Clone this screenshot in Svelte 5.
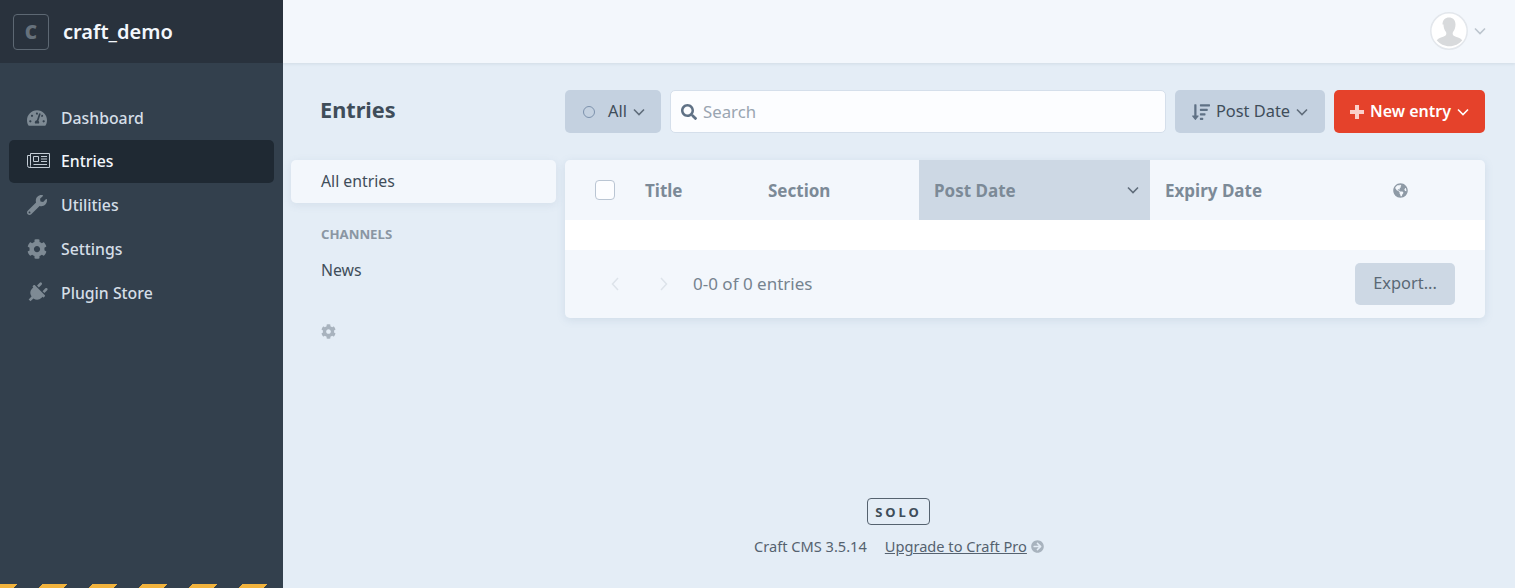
<script>
	const cog = "M487.4 315.7l-42.6-24.6c4.3-23.2 4.3-47 0-70.2l42.6-24.6c4.9-2.8 7.1-8.6 5.5-14-11.1-35.6-30-67.8-54.7-94.6-3.8-4.1-10-5.1-14.8-2.3L380.8 110c-17.9-15.4-38.5-27.3-60.8-35.1V25.8c0-5.6-3.9-10.5-9.4-11.7-36.7-8.2-74.3-7.8-109.2 0-5.5 1.2-9.4 6.1-9.4 11.7V75c-22.2 7.9-42.8 19.8-60.8 35.1L88.7 85.5c-4.9-2.8-11-1.9-14.8 2.3-24.7 26.7-43.6 58.9-54.7 94.6-1.7 5.4.6 11.2 5.5 14L67.3 221c-4.3 23.2-4.3 47 0 70.2l-42.6 24.6c-4.9 2.8-7.1 8.6-5.5 14 11.1 35.6 30 67.8 54.7 94.6 3.8 4.1 10 5.1 14.8 2.3l42.6-24.6c17.9 15.4 38.5 27.3 60.8 35.1v49.2c0 5.6 3.9 10.5 9.4 11.7 36.7 8.2 74.3 7.8 109.2 0 5.5-1.2 9.4-6.1 9.4-11.7v-49.2c22.2-7.9 42.8-19.8 60.8-35.1l42.6 24.6c4.9 2.8 11 1.9 14.8-2.3 24.7-26.7 43.6-58.9 54.7-94.6 1.5-5.5-.7-11.3-5.6-14.1zM256 336c-44.1 0-80-35.9-80-80s35.9-80 80-80 80 35.9 80 80-35.9 80-80 80z";
	const nav = [
		{ label: "Dashboard", box: "0 0 576 512", d: "M288 32C128.94 32 0 160.94 0 320c0 52.8 14.25 102.26 39.06 144.8 5.61 9.62 16.3 15.2 27.44 15.2h443c11.14 0 21.83-5.58 27.44-15.2C561.75 422.26 576 372.8 576 320c0-159.06-128.94-288-288-288zm0 64c14.71 0 26.58 10.13 30.32 23.65-1.11 2.26-2.64 4.23-3.45 6.67l-9.22 27.67c-5.13 3.49-10.97 6.01-17.64 6.01-17.67 0-32-14.33-32-32S270.33 96 288 96zM96 384c-17.67 0-32-14.33-32-32s14.33-32 32-32 32 14.33 32 32-14.33 32-32 32zm48-160c-17.67 0-32-14.33-32-32s14.33-32 32-32 32 14.33 32 32-14.33 32-32 32zm246.77-72.41l-61.33 184C343.13 347.33 352 364.54 352 384c0 11.72-3.38 22.55-8.88 32H232.88c-5.5-9.45-8.88-20.28-8.88-32 0-33.94 26.5-61.43 59.9-63.59l61.34-184.01c4.17-12.56 17.73-19.45 30.36-15.17 12.57 4.19 19.35 17.79 15.17 30.36zm14.66 57.2l15.52-46.55c3.47-1.29 7.13-2.23 11.05-2.23 17.67 0 32 14.33 32 32s-14.33 32-32 32c-11.38-.01-20.89-6.27-26.57-15.22zM480 384c-17.67 0-32-14.33-32-32s14.33-32 32-32 32 14.33 32 32-14.33 32-32 32z" },
		{ label: "Entries", active: true, news: true, box: "0 0 24 17" },
		{ label: "Utilities", box: "0 0 512 512", d: "M507.73 109.1c-2.24-9.03-13.54-12.09-20.12-5.51l-74.36 74.36-67.88-11.31-11.31-67.88 74.36-74.36c6.62-6.62 3.43-17.9-5.66-20.16-47.38-11.74-99.55.91-136.58 37.93-39.64 39.64-50.55 97.1-34.05 147.2L18.74 402.76c-24.99 24.99-24.99 65.51 0 90.5 24.99 24.99 65.51 24.99 90.5 0l213.21-213.21c50.12 16.71 107.47 5.68 147.37-34.22 37.07-37.07 49.7-89.32 37.91-136.73zM64 472c-13.25 0-24-10.75-24-24 0-13.26 10.75-24 24-24s24 10.74 24 24c0 13.25-10.75 24-24 24z" },
		{ label: "Settings", box: "0 0 512 512", d: cog },
		{ label: "Plugin Store", box: "-61 -61 634 634", plug: true, d: "M320,32a32,32,0,0,0-64,0v96h64Zm48,128H16A16,16,0,0,0,0,176v32a16,16,0,0,0,16,16H32v32A160.07,160.07,0,0,0,160,412.8V512h64V412.8A160.07,160.07,0,0,0,352,256V224h16a16,16,0,0,0,16-16V176A16,16,0,0,0,368,160ZM128,32a32,32,0,0,0-64,0v96h64Z" },
	];
	const columns = [
		{ label: "Title" },
		{ label: "Section" },
		{ label: "Post Date", sorted: true },
		{ label: "Expiry Date" },
	];
</script>

{#snippet chevron(cls)}
	<svg class="chevron {cls}" viewBox="0 0 12 8" aria-hidden="true"><path d="M1 1.5l5 5 5-5" /></svg>
{/snippet}

<div class="page">
	<aside class="sidebar">
		<div class="brand">
			<span class="logo">C</span>
			<span class="site">craft_demo</span>
		</div>
		<nav class="nav">
			{#each nav as item}
				<a class="nav-item" class:active={item.active} href="#top">
					<span class="nav-icon">
						<svg viewBox={item.box} class:plug={item.plug} class:news={item.news} aria-hidden="true">
							{#if item.plug}
								<g transform="rotate(45 256 256) translate(64 0)"><path d={item.d} /></g>
							{:else if item.news}
								<path d="M4.5 1.5h19v14h-20a2 2 0 0 1-2-2V3.500h3M4.500 1.500v12a2 2 0 0 1-1 2" />
								<path d="M7.500 4.500h5v5h-5zM15 4.500h6M15 7h6M15 9.500h6M7.500 12.500h13.500" />
							{:else}
								<path d={item.d} />
							{/if}
						</svg>
					</span>
					{item.label}
				</a>
			{/each}
		</nav>
		<div class="stripes"></div>
	</aside>

	<div class="right">
		<header class="topbar">
			<div class="avatar">
				<svg viewBox="0 0 38 38" aria-hidden="true">
					<circle cx="19" cy="19" r="18.2" fill="#fff" stroke="#e3e7ec" stroke-width="1.5" />
					<path d="M12.500 12.500c0-4.500 2.800-7 6.500-7s6.500 2.500 6.500 7c0 3-1 5.500-2.500 7.500-.6 1-.5 3 .8 3.800 2.500 1.300 6 1.900 8.500 4.400-3 3.800-7.700 6-12.800 6s-9.800-2.200-12.800-6c2.500-2.500 6-3.100 8.500-4.400 1.300-.8 1.400-2.800.8-3.800-1.500-2-2.500-4.500-2.500-7.500z" fill="#d8dadc" />
				</svg>
			</div>
			{@render chevron("user-chevron")}
		</header>

		<main class="main">
			<div class="toolbar">
				<h1>Entries</h1>
				<div class="actions">
					<button class="btn status">
						<span class="dot"></span>
						All
						{@render chevron("")}
					</button>
					<label class="search">
						<svg viewBox="0 0 512 512" aria-hidden="true"><path d="M505 442.7L405.3 343c-4.5-4.5-10.6-7-17-7H372c27.6-35.3 44-79.7 44-128C416 93.1 322.9 0 208 0S0 93.1 0 208s93.1 208 208 208c48.3 0 92.7-16.4 128-44v16.3c0 6.4 2.5 12.5 7 17l99.7 99.7c9.4 9.4 24.6 9.4 33.9 0l28.3-28.3c9.4-9.4 9.4-24.6.1-34zM208 336c-70.7 0-128-57.2-128-128 0-70.7 57.2-128 128-128 70.7 0 128 57.2 128 128 0 70.7-57.2 128-128 128z" /></svg>
						<input placeholder="Search" />
					</label>
					<button class="btn sort">
						<svg class="sort-icon" viewBox="0 0 512 512" aria-hidden="true"><path d="M304 416h-64a16 16 0 0 0-16 16v32a16 16 0 0 0 16 16h64a16 16 0 0 0 16-16v-32a16 16 0 0 0-16-16zm-128-64h-48V48a16 16 0 0 0-16-16H80a16 16 0 0 0-16 16v304H16c-14.19 0-21.37 17.24-11.29 27.31l80 96a16 16 0 0 0 22.62 0l80-96C197.35 369.26 190.22 352 176 352zm256-192H240a16 16 0 0 0-16 16v32a16 16 0 0 0 16 16h192a16 16 0 0 0 16-16v-32a16 16 0 0 0-16-16zm-64 128H240a16 16 0 0 0-16 16v32a16 16 0 0 0 16 16h128a16 16 0 0 0 16-16v-32a16 16 0 0 0-16-16zM496 32H240a16 16 0 0 0-16 16v32a16 16 0 0 0 16 16h256a16 16 0 0 0 16-16V48a16 16 0 0 0-16-16z" /></svg>
						Post Date
						{@render chevron("")}
					</button>
					<button class="btn primary">
						<span class="plus"></span>
						New entry
						{@render chevron("")}
					</button>
				</div>
			</div>

			<div class="content">
				<div class="sources">
					<a class="source selected" href="#top">All entries</a>
					<div class="heading">CHANNELS</div>
					<a class="source" href="#top">News</a>
					<svg class="customize" viewBox="0 0 512 512" aria-hidden="true"><path d={cog} /></svg>
				</div>

				<div class="card">
					<div class="thead">
						<div class="th check"><span class="checkbox"></span></div>
						{#each columns as col}
							<div class="th" class:sorted={col.sorted}>
								{col.label}
								{#if col.sorted}{@render chevron("th-chevron")}{/if}
							</div>
						{/each}
						<div class="th globe">
							<svg viewBox="0 0 496 512" aria-hidden="true"><path d="M248 8C111.03 8 0 119.03 0 256s111.03 248 248 248 248-111.03 248-248S384.97 8 248 8zm82.29 357.6c-3.9 3.88-7.99 7.95-11.31 11.28-2.99 3-5.1 6.7-6.17 10.71-1.51 5.66-2.73 11.38-4.77 16.87l-17.39 46.85c-13.76 3-28 4.69-42.65 4.69v-27.38c1.69-12.62-7.64-36.26-22.63-51.25-6-6-9.37-14.14-9.37-22.63v-32.01c0-11.64-6.27-22.34-16.46-27.97-14.37-7.95-34.81-19.06-48.81-26.11-11.48-5.78-22.1-13.14-31.65-21.75l-.8-.72a114.792 114.792 0 0 1-18.06-20.74c-9.38-13.77-24.66-36.42-34.59-51.14 20.47-45.5 57.36-82.04 103.2-101.89l24.01 12.01C203.48 89.74 216 82.01 216 70.11v-11.3c7.99-1.29 16.12-2.11 24.39-2.42l28.3 28.3c6.25 6.25 6.25 16.38 0 22.63L264 112l-10.34 10.34c-3.12 3.12-3.12 8.19 0 11.31l4.69 4.69c3.12 3.12 3.12 8.19 0 11.31l-8 8a8.008 8.008 0 0 1-5.66 2.34h-8.99c-2.08 0-4.08.81-5.58 2.27l-9.92 9.65a8.008 8.008 0 0 0-1.58 9.31l15.59 31.19c2.66 5.32-1.21 11.58-7.15 11.58h-5.64c-1.93 0-3.79-.7-5.24-1.96l-9.28-8.06a16.017 16.017 0 0 0-15.55-3.1l-31.17 10.39a11.95 11.95 0 0 0-8.17 11.34c0 4.53 2.56 8.66 6.61 10.69l11.08 5.54c9.41 4.71 19.79 7.16 30.31 7.16s22.59 27.29 32 32h66.75c8.49 0 16.62 3.37 22.63 9.37l13.69 13.69a30.503 30.503 0 0 1 8.93 21.57 46.536 46.536 0 0 1-13.72 32.98zM417 274.25c-5.79-1.45-10.84-5-14.15-9.97l-17.98-26.97a23.97 23.97 0 0 1 0-26.62l19.59-29.38c2.32-3.47 5.5-6.29 9.24-8.15l12.98-6.49C440.2 193.59 448 223.87 448 256c0 8.67-.74 17.16-1.82 25.54L417 274.25z" /></svg>
						</div>
					</div>
					<div class="tbody"></div>
					<div class="tfoot">
						<svg class="pager" viewBox="0 0 8 14" aria-hidden="true"><path d="M7 1L1.5 7 7 13" /></svg>
						<svg class="pager next" viewBox="0 0 8 14" aria-hidden="true"><path d="M1 1l5.5 6L1 13" /></svg>
						<span class="count">0-0 of 0 entries</span>
						<button class="btn export">Export...</button>
					</div>
				</div>
			</div>

			<footer class="footer">
				<div class="edition">SOLO</div>
				<div class="meta">
					<span>Craft CMS 3.5.14</span>
					<a href="#top">Upgrade to Craft Pro</a>
					<svg viewBox="0 0 512 512" aria-hidden="true"><path d="M256 8c137 0 248 111 248 248S393 504 256 504 8 393 8 256 119 8 256 8zm-28.9 143.6l75.5 72.4H120c-13.3 0-24 10.7-24 24v16c0 13.3 10.7 24 24 24h182.6l-75.5 72.4c-9.7 9.3-9.9 24.8-.4 34.3l11 10.9c9.4 9.4 24.6 9.4 33.9 0L404.3 273c9.4-9.4 9.4-24.6 0-33.9L271.6 106.3c-9.4-9.4-24.6-9.4-33.9 0l-11 10.9c-9.5 9.6-9.3 25.1.4 34.4z" /></svg>
				</div>
			</footer>
		</main>
	</div>
</div>

<style>
	:global(body) {
		margin: 0;
		background: #e4edf6;
		font-family: "Noto Sans", sans-serif;
		font-size: 15px;
		color: #3f4d5a;
	}

	.page {
		display: flex;
		height: 588px;
		overflow: hidden;
	}

	.sidebar {
		position: relative;
		width: 283px;
		flex-shrink: 0;
		background: #33404d;
		display: flex;
		flex-direction: column;
		overflow: hidden;
	}

	.brand {
		height: 63px;
		background: #29323d;
		display: flex;
		align-items: center;
		padding-left: 13px;
		gap: 14px;
	}

	.logo {
		width: 36px;
		height: 36px;
		box-sizing: border-box;
		border: 1px solid #5d6873;
		border-radius: 4px;
		display: flex;
		align-items: center;
		justify-content: center;
		color: #66717c;
		font-family: "Open Sans", sans-serif;
		font-weight: 800;
		font-size: 19px;
	}

	.site {
		color: #f3f7fc;
		font-size: 20px;
		font-weight: 600;
	}

	.nav {
		padding: 33px 9px 0;
		display: flex;
		flex-direction: column;
	}

	.nav-item {
		display: flex;
		align-items: center;
		box-sizing: border-box;
		height: 44px;
		padding-left: 17px;
		border-radius: 5px;
		color: #d5dee7;
		font-weight: 500;
		font-size: 15.8px;
		text-decoration: none;
	}

	.nav-item:not(:first-child) {
		padding-bottom: 2px;
	}

	.nav-item.active {
		background: #1f2933;
		color: #f3f7fc;
		height: 43px;
		margin-bottom: 1px;
	}

	.nav-icon {
		width: 35px;
		display: flex;
		align-items: center;
	}

	.nav-icon svg {
		width: 20px;
		height: 20px;
		margin-left: 1px;
		fill: #7e8a94;
	}

	.nav-icon .news {
		width: 24px;
		height: 17px;
		margin-left: 0;
		fill: none;
		stroke: #c3ccd5;
		stroke-width: 1;
	}

	.nav-icon .plug {
		width: 26px;
		height: 26px;
		margin-left: -2px;
	}

	.stripes {
		position: absolute;
		left: 0;
		right: -31px;
		bottom: 0;
		height: 4px;
		background: repeating-linear-gradient(-45deg, #f2b33d 0 17.68px, transparent 17.68px 35.36px);
	}

	.right {
		flex: 1;
		min-width: 0;
		display: flex;
		flex-direction: column;
	}

	.topbar {
		height: 63px;
		flex-shrink: 0;
		background: #f3f7fc;
		box-shadow: 0 1px 3px rgba(51, 64, 77, 0.1);
		display: flex;
		align-items: center;
		justify-content: flex-end;
		padding: 0 29px 1px 0;
		box-sizing: border-box;
	}

	.avatar {
		width: 38px;
		height: 38px;
		margin-right: 6px;
	}

	.avatar svg {
		display: block;
		width: 38px;
		height: 38px;
	}

	.chevron {
		width: 12px;
		height: 8px;
		fill: none;
		stroke: currentColor;
		stroke-width: 1.6;
		flex-shrink: 0;
	}

	.user-chevron {
		color: #bcc5ce;
	}

	.main {
		flex: 1;
		display: flex;
		flex-direction: column;
		min-height: 0;
		padding: 27px 30px 0 8px;
	}

	.toolbar {
		display: flex;
		align-items: center;
		height: 43px;
	}

	h1 {
		width: 274px;
		box-sizing: border-box;
		padding-left: 29px;
		margin: 0 0 5px;
		font-size: 21.7px;
		font-weight: 700;
		color: #3f4d5a;
		flex-shrink: 0;
	}

	.actions {
		flex: 1;
		display: flex;
		gap: 9px;
		height: 43px;
	}

	.btn {
		border: 0;
		border-radius: 5px;
		background: #c4d1e0;
		color: #3f4d5a;
		font: inherit;
		font-size: 16.4px;
		display: flex;
		align-items: center;
		justify-content: center;
		padding: 0 0 2px;
	}

	.btn svg,
	.btn .plus,
	.btn .dot {
		position: relative;
		top: 1px;
	}

	.status {
		width: 96px;
		gap: 6px;
	}

	.status .chevron,
	.sort .chevron {
		color: #606d7b;
	}

	.dot {
		width: 10px;
		height: 10px;
		border: 1px solid #7d92ad;
		border-radius: 50%;
		margin: 0 7px 0 2px;
	}

	.search {
		flex: 1;
		box-sizing: border-box;
		background: #fcfdff;
		border: 1px solid #d5dfeb;
		border-radius: 5px;
		display: flex;
		align-items: center;
		padding-left: 10px;
		gap: 6px;
	}

	.search svg {
		width: 16px;
		height: 16px;
		fill: #5f7185;
	}

	.search input {
		flex: 1;
		border: 0;
		outline: 0;
		background: none;
		font: inherit;
		font-size: 16.8px;
		padding: 0;
	}

	.search input::placeholder {
		color: #9aa5b1;
		opacity: 1;
	}

	.sort {
		width: 150px;
		gap: 6px;
	}

	.sort-icon {
		width: 18px;
		height: 18px;
		fill: #5f7185;
	}

	.primary {
		width: 151px;
		background: #e5422b;
		color: #fff;
		font-weight: 600;
		font-size: 16px;
		gap: 6px;
	}

	.plus {
		width: 14px;
		height: 14px;
		background:
			linear-gradient(#fbd0ca, #fbd0ca) center / 14px 4px no-repeat,
			linear-gradient(#fbd0ca, #fbd0ca) center / 4px 14px no-repeat;
	}

	.content {
		display: flex;
		margin-top: 27px;
	}

	.sources {
		width: 265px;
		margin-right: 9px;
		flex-shrink: 0;
	}

	.source {
		display: flex;
		align-items: center;
		box-sizing: border-box;
		height: 43px;
		padding-left: 30px;
		border-radius: 5px;
		color: #3f4d5a;
		font-size: 15.8px;
		text-decoration: none;
	}

	.selected {
		background: #f3f7fc;
		box-shadow: 0 2px 8px rgba(96, 125, 159, 0.12);
		padding-bottom: 2px;
	}

	.heading {
		padding: 24px 0 7px 30px;
		font-size: 13.2px;
		line-height: 14px;
		font-weight: 700;
		color: #8a96a3;
	}

	.customize {
		display: block;
		width: 15px;
		height: 15px;
		margin: 33px 0 0 30px;
		fill: #a8b3be;
	}

	.card {
		flex: 1;
		border-radius: 5px;
		overflow: hidden;
		background: #f3f7fc;
		box-shadow: 0 2px 8px rgba(96, 125, 159, 0.15);
		height: 158px;
	}

	.thead {
		display: grid;
		grid-template-columns: 65px 123px 166px 231px 235px 1fr;
		height: 60px;
	}

	.th {
		display: flex;
		align-items: center;
		padding-left: 15px;
		font-weight: 700;
		font-size: 17px;
		color: #7c8a97;
	}

	.check {
		padding-left: 30px;
	}

	.checkbox {
		width: 20px;
		height: 20px;
		box-sizing: border-box;
		background: #fcfdff;
		border: 1px solid #b9c5d3;
		border-radius: 4px;
	}

	.sorted {
		background: #cdd8e4;
		justify-content: space-between;
		padding-right: 11px;
	}

	.th-chevron {
		color: #606d7b;
	}

	.globe {
		padding-left: 8px;
	}

	.globe svg {
		width: 15px;
		height: 15px;
		fill: #8e9aa6;
	}

	.tbody {
		height: 30px;
		background: #fff;
	}

	.tfoot {
		height: 68px;
		display: flex;
		align-items: center;
		padding: 0 30px 0 45px;
	}

	.pager {
		width: 10px;
		height: 14px;
		fill: none;
		stroke: #dde3ea;
		stroke-width: 1.5;
	}

	.next {
		margin-left: 39px;
	}

	.count {
		margin: 0 0 2px 24px;
		font-size: 17px;
		color: #76838f;
	}

	.export {
		margin-left: auto;
		width: 100px;
		height: 42px;
		padding-bottom: 4px;
		background: #cdd8e4;
		color: #5a6875;
	}

	.footer {
		margin: auto -30px 0 -8px;
		padding-bottom: 32px;
		display: flex;
		flex-direction: column;
		align-items: center;
	}

	.edition {
		box-sizing: border-box;
		width: 63px;
		height: 27px;
		margin-left: -1px;
		border: 1px solid #55626f;
		border-radius: 4px;
		display: flex;
		align-items: center;
		justify-content: center;
		font-size: 13px;
		font-weight: 700;
		letter-spacing: 3px;
		color: #3f4d5a;
	}

	.meta {
		margin-top: 11px;
		display: flex;
		align-items: center;
		font-size: 14.6px;
		line-height: 20px;
		color: #55626f;
	}

	.meta a {
		margin-left: 18px;
		color: #55626f;
		text-decoration: underline;
	}

	.meta svg {
		width: 13px;
		height: 13px;
		margin-left: 4px;
		fill: #a8b3be;
	}
</style>
